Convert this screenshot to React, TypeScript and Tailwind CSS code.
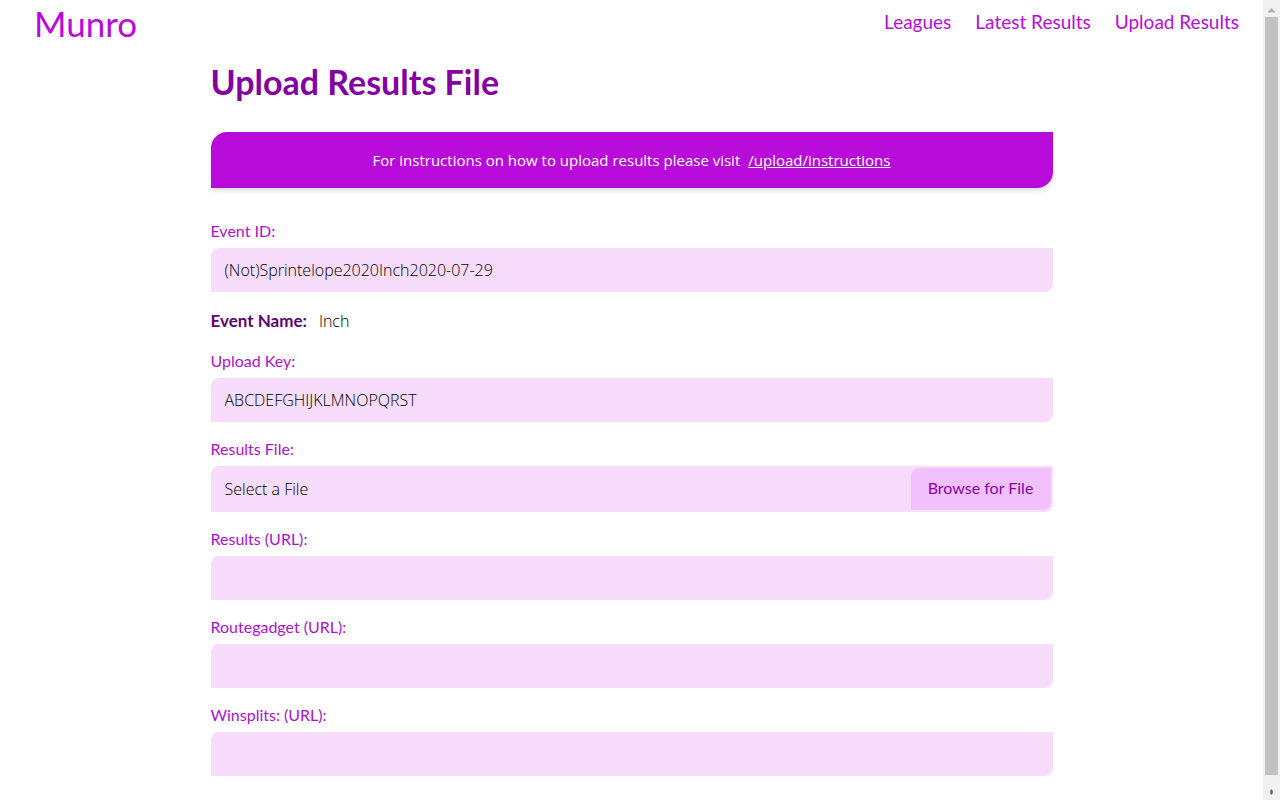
type FieldProps = {
  id: string;
  label: string;
  value?: string;
};

function FieldLabel({ id, label }: { id: string; label: string }) {
  return (
    <label
      htmlFor={id}
      className="mb-1.5 block font-['Lato',sans-serif] text-base leading-[22px] text-[#ad12cb]"
    >
      {label}
    </label>
  );
}

function Field({ id, label, value = '' }: FieldProps) {
  return (
    <div>
      <FieldLabel id={id} label={label} />
      <input
        id={id}
        type="text"
        defaultValue={value}
        className="block h-11 w-full rounded-tl-lg rounded-br-lg bg-[#f7ddfb] px-3.5 text-base font-light text-black outline-none"
      />
    </div>
  );
}

function FilePicker() {
  return (
    <div>
      <FieldLabel id="results-file" label="Results File:" />
      <div className="flex items-stretch rounded-tl-lg rounded-br-lg bg-[#f7ddfb] p-0.5 pl-3.5">
        <input
          id="results-file"
          type="text"
          readOnly
          defaultValue="Select a File"
          className="min-w-0 flex-1 bg-transparent text-base font-light text-black outline-none"
        />
        <button
          type="button"
          className="h-[42px] w-[140px] rounded-tl-lg rounded-br-lg bg-[#f2c0fd] pb-0.5 font-['Lato',sans-serif] text-base text-[#8a04a3]"
        >
          Browse for File
        </button>
      </div>
    </div>
  );
}

function Scrollbar() {
  return (
    <div
      aria-hidden="true"
      className="flex w-[17px] shrink-0 flex-col items-center bg-[#f1f1f1]"
    >
      <div className="flex h-[17px] shrink-0 items-center justify-center">
        <svg width="7" height="5" viewBox="0 0 7 5" className="mt-1">
          <path d="M3.5 0 7 3.5V4.5H0V3.5Z" fill="#b5afb5" />
        </svg>
      </div>
      <div className="w-[13px] flex-1 bg-[#c1c1c1]" />
      <div className="flex h-[25px] shrink-0 items-center justify-center">
        <svg width="3" height="6" viewBox="0 0 3 6" className="mt-2">
          <ellipse cx="1.5" cy="3" rx="1.3" ry="2.8" fill="#606060" />
        </svg>
      </div>
    </div>
  );
}

export default function App() {
  return (
    <div className="flex h-screen bg-white font-['Open_Sans','Noto_Sans',sans-serif] text-[15px] text-black">
      <div className="min-w-0 flex-1 overflow-hidden">
        <header className="flex h-12 items-start justify-between pr-6 pl-[34px] font-['Lato',sans-serif] text-[#b80bd9]">
          <a href="#home" className="pt-0.5 text-[35px] leading-[42px]">
            Munro
          </a>
          <nav className="flex gap-6 pt-2 text-[19px] leading-7">
            <a href="#leagues">Leagues</a>
            <a href="#latest">Latest Results</a>
            <a href="#upload">Upload Results</a>
          </nav>
        </header>
        <main className="mx-auto w-2/3 pb-6">
          <h1 className="pt-3.5 pb-[30px] font-['Lato',sans-serif] text-[34px] leading-10 font-bold text-[#8500a0]">
            Upload Results File
          </h1>
          <p className="mb-8 flex h-14 items-center justify-center gap-2 rounded-tl-2xl rounded-br-2xl bg-[#b80bd9] text-[15px] text-white shadow-md">
            <span>For instructions on how to upload results please visit</span>
            <a href="#instructions" className="underline">
              /upload/instructions
            </a>
          </p>
          <form className="flex flex-col gap-4">
            <Field id="event-id" label="Event ID:" value="(Not)Sprintelope2020Inch2020-07-29" />
            <p className="flex items-center gap-3 leading-[26px]">
              <span className="font-['Lato',sans-serif] text-[17px] leading-[26px] font-bold text-[#5b046e]">
                Event Name:
              </span>
              <span className="text-base leading-[26px] font-light">Inch</span>
            </p>
            <Field id="upload-key" label="Upload Key:" value="ABCDEFGHIJKLMNOPQRST" />
            <FilePicker />
            <Field id="results-url" label="Results (URL):" />
            <Field id="routegadget-url" label="Routegadget (URL):" />
            <Field id="winsplits-url" label="Winsplits: (URL):" />
          </form>
        </main>
      </div>
      <Scrollbar />
    </div>
  );
}
